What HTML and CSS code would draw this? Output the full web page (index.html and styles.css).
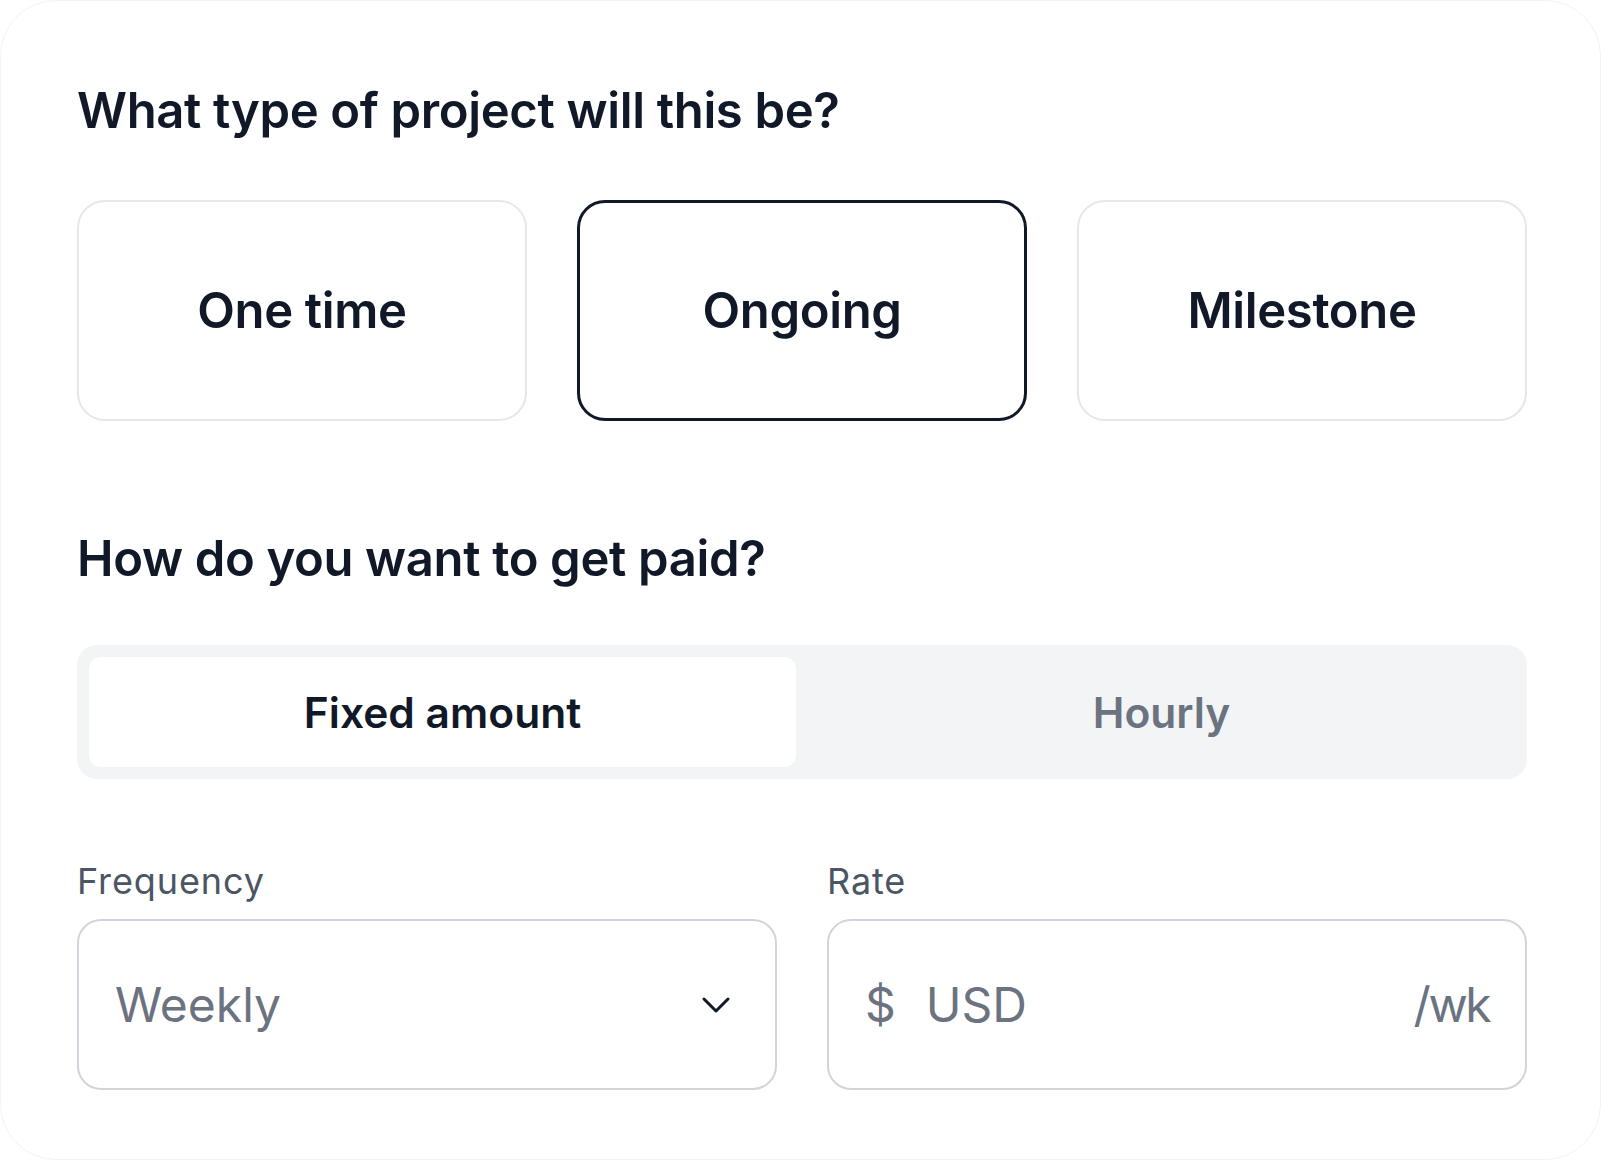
FILE: index.html
```html
<!DOCTYPE html>
<html lang="en">
<head>
<meta charset="utf-8">
<title>Project setup</title>
<link rel="stylesheet" href="styles.css">
</head>
<body>
<div class="card">
  <h1 class="question">What type of project will this be?</h1>
  <div class="options">
    <button class="option">One time</button>
    <button class="option selected">Ongoing</button>
    <button class="option">Milestone</button>
  </div>

  <h2 class="question second">How do you want to get paid?</h2>
  <div class="segmented">
    <button class="seg active">Fixed amount</button>
    <button class="seg">Hourly</button>
  </div>

  <div class="fields">
    <div class="field">
      <div class="label">Frequency</div>
      <div class="input">
        <span class="value">Weekly</span>
        <svg class="chevron" width="30" height="18" viewBox="0 0 30 18" aria-hidden="true">
          <path d="M3 3 L15 15 L27 3" fill="none" stroke="#111827" stroke-width="3" stroke-linecap="round" stroke-linejoin="round"/>
        </svg>
      </div>
    </div>
    <div class="field">
      <div class="label">Rate</div>
      <div class="input">
        <span class="currency">$</span>
        <span class="value grow">USD</span>
        <span class="suffix">/wk</span>
      </div>
    </div>
  </div>
</div>
</body>
</html>
```

FILE: styles.css
```css
* { box-sizing: border-box; }

html, body {
  margin: 0;
  padding: 0;
  background: #ffffff;
}

body {
  font-family: Inter, "Noto Sans", "Liberation Sans", sans-serif;
  color: #111827;
}

.card {
  width: 1601px;
  height: 1160px;
  border: 1px solid #f3f3f3;
  border-radius: 56px;
  background: #ffffff;
  padding: 80px 73px 0 76px;
}

.question {
  margin: 0;
  font-size: 49px;
  line-height: 60px;
  font-weight: 600;
  letter-spacing: -0.35px;
  color: #111827;
}

.question.second {
  margin-top: 108px;
}

.options {
  margin-top: 59px;
  display: grid;
  grid-template-columns: repeat(3, 1fr);
  gap: 50px;
}

.option {
  height: 221px;
  border: 2px solid #e5e7eb;
  border-radius: 28px;
  background: #ffffff;
  font-family: inherit;
  font-size: 49px;
  font-weight: 600;
  color: #111827;
  letter-spacing: -0.35px;
  padding: 0;
  cursor: pointer;
}

.option.selected {
  border: 3px solid #111827;
}

.segmented {
  margin-top: 56px;
  height: 134px;
  background: #f3f4f6;
  border-radius: 20px;
  padding: 12px;
  display: grid;
  grid-template-columns: 1fr 1fr;
  gap: 12px;
}

.seg {
  border: none;
  background: transparent;
  border-radius: 12px;
  font-family: inherit;
  font-size: 42.5px;
  font-weight: 600;
  color: #6b7280;
  padding: 0;
  cursor: pointer;
}

.seg.active {
  background: #ffffff;
  color: #111827;
}

.fields {
  margin-top: 80px;
  display: grid;
  grid-template-columns: 1fr 1fr;
  gap: 50px;
}

.label {
  font-size: 36px;
  line-height: 44px;
  font-weight: 400;
  color: #4b5563;
  letter-spacing: 0.9px;
  margin-bottom: 16px;
}

.input {
  height: 171px;
  border: 2px solid #d1d5db;
  border-radius: 24px;
  display: flex;
  align-items: center;
  padding: 0 34px 0 36px;
  font-size: 48px;
  color: #6b7280;
}

.value {
  flex: 1;
}

.currency {
  margin-right: 30px;
}

.suffix {
  letter-spacing: -2.5px;
  margin-right: 2px;
}

.chevron {
  display: block;
  margin-right: 10px;
}
```
